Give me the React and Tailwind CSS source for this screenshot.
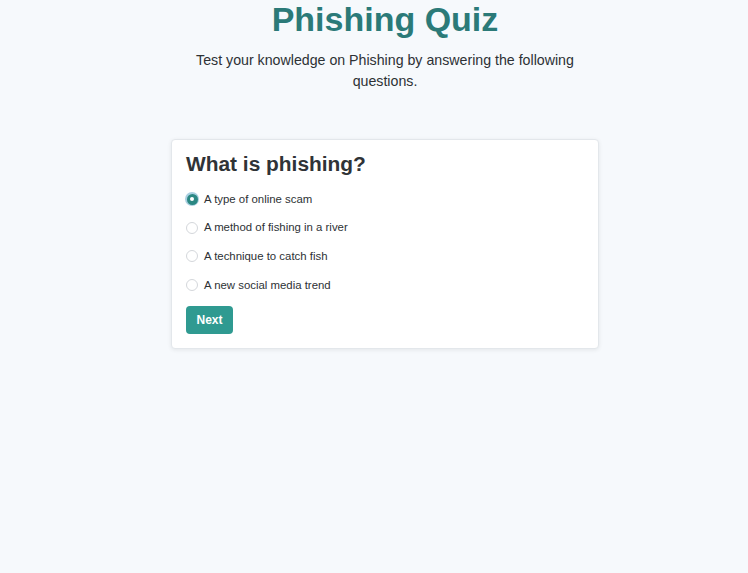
import React, { useState } from "react";

const options = [
  "A type of online scam",
  "A method of fishing in a river",
  "A technique to catch fish",
  "A new social media trend",
];

function Radio({ checked }) {
  if (checked) {
    return (
      <span className="flex h-[12px] w-[12px] shrink-0 items-center justify-center">
        <span className="flex h-[14px] w-[14px] shrink-0 items-center justify-center rounded-full bg-[#a9cfe0]">
          <span className="flex h-[11px] w-[11px] items-center justify-center rounded-full bg-[#2b8883]">
            <span className="h-[4px] w-[4px] rounded-full bg-white" />
          </span>
        </span>
      </span>
    );
  }
  return (
    <span className="h-[12px] w-[12px] shrink-0 rounded-full border border-[#d4d7db] bg-white" />
  );
}

export default function App() {
  const [sel, setSel] = useState(0);
  return (
    <div
      className="min-h-screen bg-[#f6f9fc] pl-[22px] flex flex-col items-center text-[#2d3135]"
      style={{ fontFamily: '"Liberation Sans", Arial, sans-serif' }}
    >
      <h1 className="text-[34px] font-bold leading-[38px] text-[#2b7a78]">Phishing Quiz</h1>
      <p className="mt-[12px] w-[428px] text-center text-[14.2px] leading-[21px] text-[#2d3135]">
        Test your knowledge on Phishing by answering the following questions.
      </p>
      <div className="mt-[47px] w-[428px] rounded-[4px] border border-[#e3e7eb] bg-white px-[14px] pt-[12px] pb-[14px] shadow-[0_1px_4px_rgba(0,0,0,0.08)]">
        <h2 className="text-[20.9px] font-bold leading-[24px] text-[#2f3337]">What is phishing?</h2>
        <div className="mt-[9px] flex flex-col">
          {options.map((o, i) => (
            <label
              key={o}
              onClick={() => setSel(i)}
              className="flex h-[28.6px] cursor-pointer items-center gap-[6px] text-[11.4px] text-[#2d3135]"
            >
              <Radio checked={sel === i} />
              <span>{o}</span>
            </label>
          ))}
        </div>
        <button className="mt-[7px] flex h-[28px] w-[47px] items-center justify-center rounded-[4px] bg-[#2f9a91] text-[12px] font-bold text-white">
          Next
        </button>
      </div>
    </div>
  );
}
